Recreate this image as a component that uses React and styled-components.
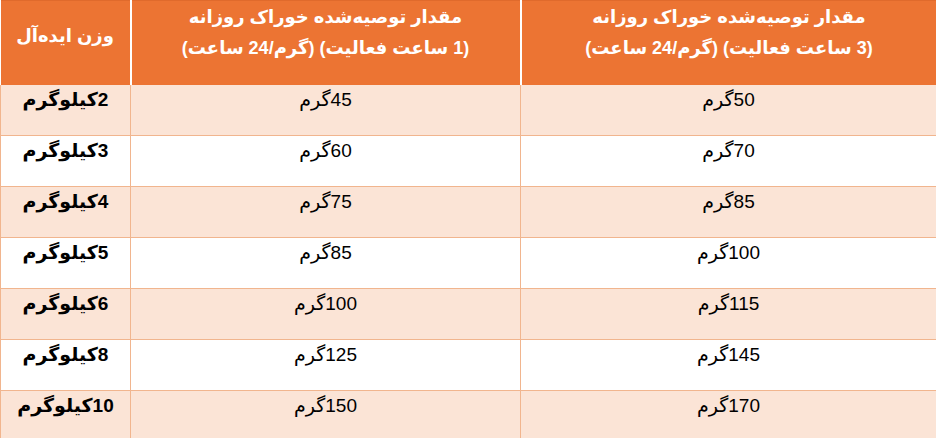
import React from "react";
import styled, { createGlobalStyle } from "styled-components";

const Global = createGlobalStyle`
  html, body { margin: 0; padding: 0; background: #ffffff; }
  body { font-family: "Liberation Sans", "DejaVu Sans", sans-serif; }
`;

const Table = styled.table`
  width: 936px;
  border-collapse: collapse;
  table-layout: fixed;
  direction: ltr;
  font-family: "Liberation Sans", "DejaVu Sans", sans-serif;
`;

const HeadRow = styled.tr`
  background: #ec7433;
  height: 84px;
`;

const HeadCell = styled.th`
  direction: rtl;
  color: #ffffff;
  font-weight: 700;
  font-size: 18px;
  line-height: 31px;
  text-align: center;
  vertical-align: top;
  padding: ${(p) => (p.$single ? "20px 6px 0" : "1px 6px 0")};
  border-left: 2px solid #ffffff;
  border-top: 1px solid #e06a2c;
  &:first-child { border-left: none; }
`;

const Line = styled.div`
  white-space: nowrap;
`;

const Row = styled.tr`
  background: ${(p) => (p.$shaded ? "#fbe4d6" : "#ffffff")};
  height: 51px;
`;

const Cell = styled.td`
  direction: rtl;
  text-align: center;
  vertical-align: top;
  padding: 3px 6px 0;
  font-size: 19px;
  line-height: 24px;
  color: #000000;
  font-weight: ${(p) => (p.$bold ? 700 : 400)};
  border: 1px solid #f1b58e;
  border-top: none;
`;

const rows = [
  ["2", "45", "50"],
  ["3", "60", "70"],
  ["4", "75", "85"],
  ["5", "85", "100"],
  ["6", "100", "115"],
  ["8", "125", "145"],
  ["10", "150", "170"],
];

export default function App() {
  return (
    <>
      <Global />
      <Table>
        <colgroup>
          <col style={{ width: 130 }} />
          <col style={{ width: 390 }} />
          <col style={{ width: 416 }} />
        </colgroup>
        <thead>
          <HeadRow>
            <HeadCell $single>
              <Line>وزن ایده‌آل</Line>
            </HeadCell>
            <HeadCell>
              <Line>مقدار توصیه‌شده خوراک روزانه</Line>
              <Line>(1 ساعت فعالیت) (گرم/24 ساعت)</Line>
            </HeadCell>
            <HeadCell>
              <Line>مقدار توصیه‌شده خوراک روزانه</Line>
              <Line>(3 ساعت فعالیت) (گرم/24 ساعت)</Line>
            </HeadCell>
          </HeadRow>
        </thead>
        <tbody>
          {rows.map(([w, a, b], i) => (
            <Row key={w} $shaded={i % 2 === 0}>
              <Cell $bold>{w}کیلوگرم</Cell>
              <Cell>{a}گرم</Cell>
              <Cell>{b}گرم</Cell>
            </Row>
          ))}
        </tbody>
      </Table>
    </>
  );
}
